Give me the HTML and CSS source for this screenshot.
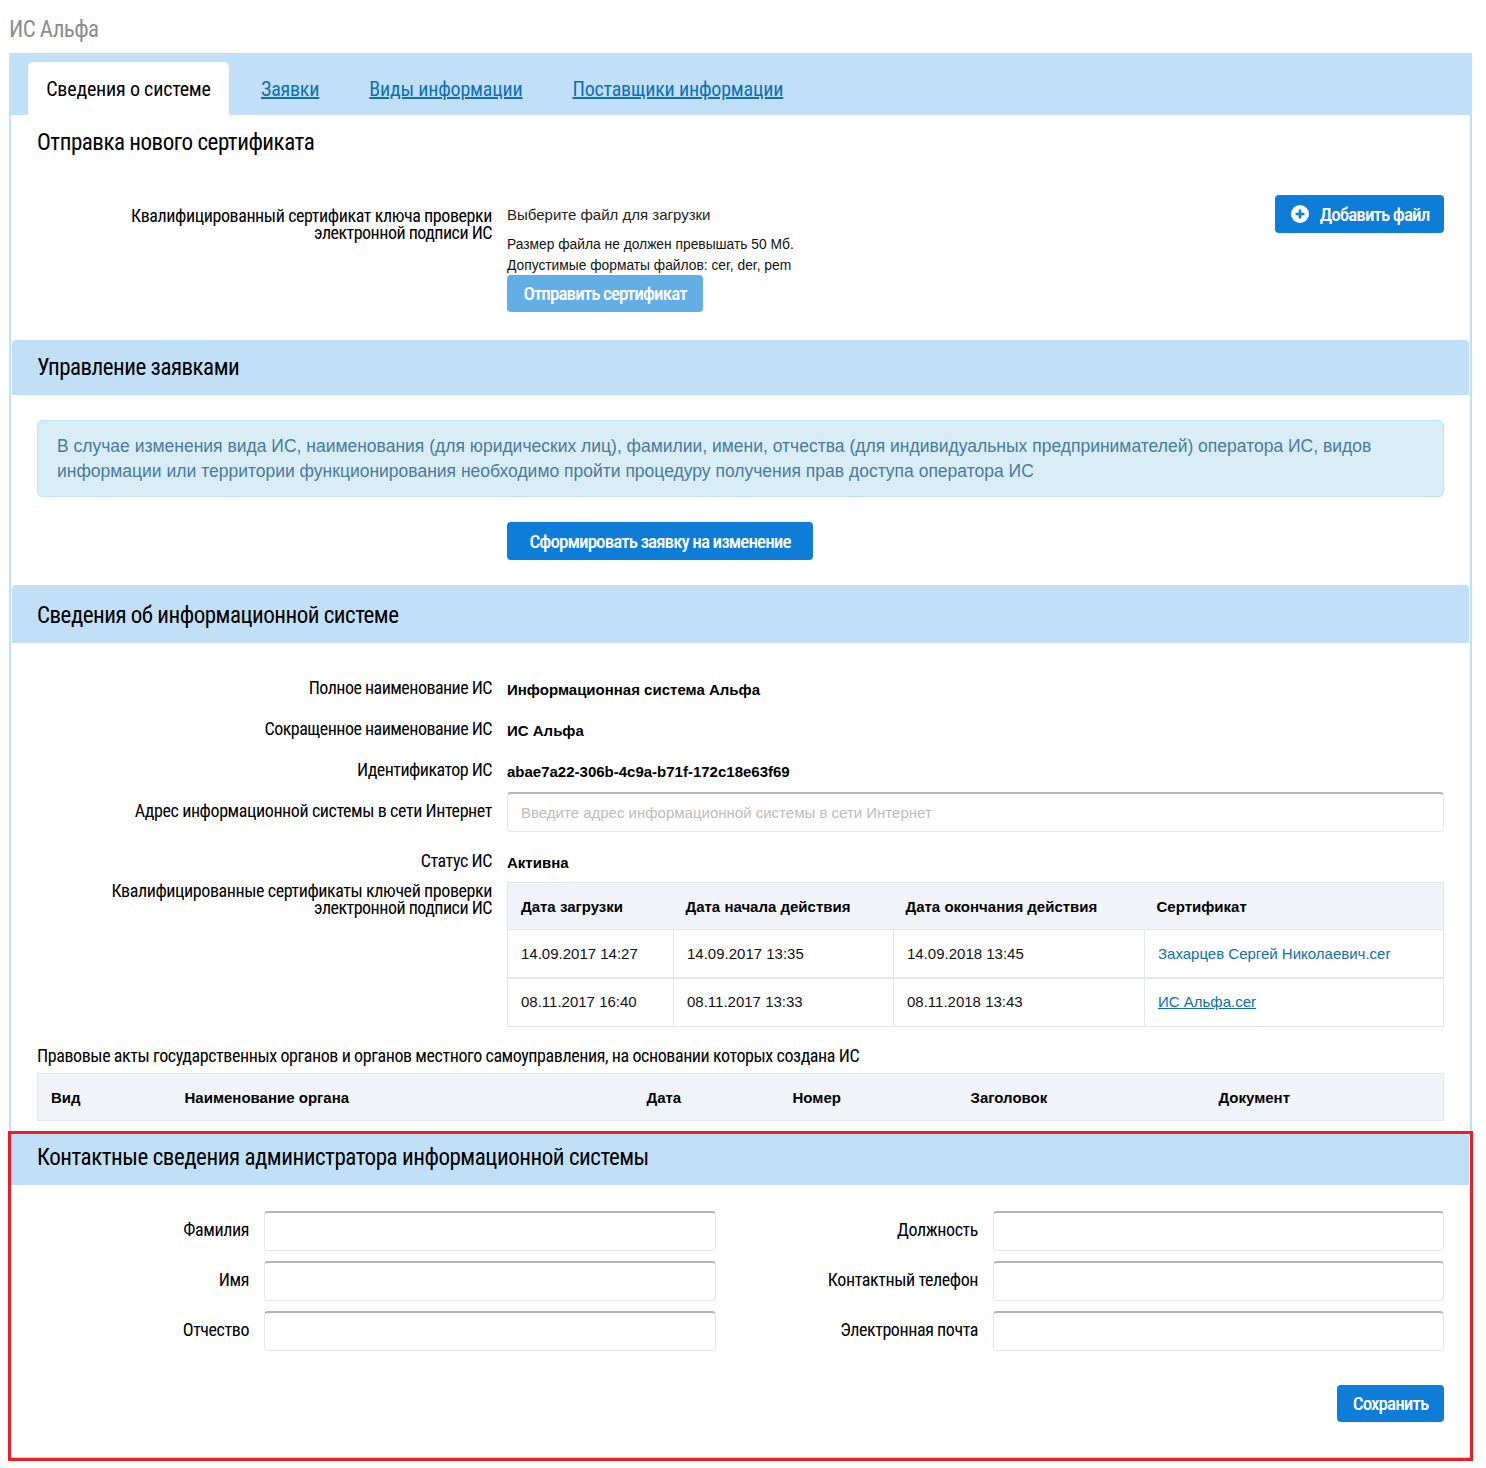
FILE: index.html
```html
<!DOCTYPE html>
<html lang="ru">
<head>
<meta charset="utf-8">
<title>ИС Альфа</title>
<link rel="stylesheet" href="styles.css">
</head>
<body>
<div class="page">
  <div class="page-title">ИС Альфа</div>
  <nav class="tabs">
    <span class="tab active">Сведения о системе</span>
    <a class="tab" href="#">Заявки</a>
    <a class="tab" href="#">Виды информации</a>
    <a class="tab" href="#">Поставщики информации</a>
  </nav>
  <main class="panel">
    <section class="cert">
      <h2 class="plain-head">Отправка нового сертификата</h2>
      <div class="cert-row">
        <div class="label two-line">Квалифицированный сертификат ключа проверки<br><span class="tight">электронной подписи ИС</span></div>
        <div class="cert-body">
          <div class="pick">Выберите файл для загрузки</div>
          <div class="hint">Размер файла не должен превышать 50 Мб.</div>
          <div class="hint">Допустимые форматы файлов: cer, der, pem</div>
          <button class="btn btn-send" type="button">Отправить сертификат</button>
        </div>
        <button class="btn btn-add" type="button">
          <svg class="plus" viewBox="0 0 18 18" width="18" height="18" aria-hidden="true"><circle cx="9" cy="9" r="9" fill="#fff"/><path d="M9 4.5v9M4.5 9h9" stroke="#0d7dd8" stroke-width="2.6"/></svg>
          Добавить файл
        </button>
      </div>
    </section>

    <h2 class="band band-a">Управление заявками</h2>
    <div class="alert">В случае изменения вида ИС, наименования (для юридических лиц), фамилии, имени, отчества (для индивидуальных предпринимателей) оператора ИС, видов информации или территории функционирования необходимо пройти процедуру получения прав доступа оператора ИС</div>
    <div class="center-action"><button class="btn btn-form" type="button">Сформировать заявку на изменение</button></div>

    <h2 class="band band-b">Сведения об информационной системе</h2>
    <div class="info">
      <div class="info-row"><div class="label">Полное наименование ИС</div><div class="value">Информационная система Альфа</div></div>
      <div class="info-row"><div class="label">Сокращенное наименование ИС</div><div class="value">ИС Альфа</div></div>
      <div class="info-row"><div class="label">Идентификатор ИС</div><div class="value">abae7a22-306b-4c9a-b71f-172c18e63f69</div></div>
      <div class="info-row input-row"><div class="label">Адрес информационной системы в сети Интернет</div><input class="field" type="text" placeholder="Введите адрес информационной системы в сети Интернет"></div>
      <div class="info-row status-row"><div class="label">Статус ИС</div><div class="value">Активна</div></div>
      <div class="table-row">
        <div class="label two-line">Квалифицированные сертификаты ключей проверки<br><span class="tight">электронной подписи ИС</span></div>
        <table class="grid certs">
          <thead><tr><th>Дата загрузки</th><th>Дата начала действия</th><th>Дата окончания действия</th><th>Сертификат</th></tr></thead>
          <tbody>
            <tr><td>14.09.2017 14:27</td><td>14.09.2017 13:35</td><td>14.09.2018 13:45</td><td><a class="plain-link" href="#">Захарцев Сергей Николаевич.cer</a></td></tr>
            <tr class="second"><td>08.11.2017 16:40</td><td>08.11.2017 13:33</td><td>08.11.2018 13:43</td><td><a href="#">ИС Альфа.cer</a></td></tr>
          </tbody>
        </table>
      </div>
      <div class="acts-title">Правовые акты государственных органов и органов местного самоуправления, на основании которых создана ИС</div>
      <table class="grid acts">
        <thead><tr><th>Вид</th><th>Наименование органа</th><th>Дата</th><th>Номер</th><th>Заголовок</th><th>Документ</th></tr></thead>
      </table>
    </div>

    <section class="contact">
      <h2 class="band band-c">Контактные сведения администратора информационной системы</h2>
      <div class="contact-grid">
        <label class="label">Фамилия</label><input class="field" type="text">
        <label class="label">Должность</label><input class="field" type="text">
        <label class="label">Имя</label><input class="field" type="text">
        <label class="label">Контактный телефон</label><input class="field" type="text">
        <label class="label">Отчество</label><input class="field" type="text">
        <label class="label">Электронная почта</label><input class="field" type="text">
      </div>
      <div class="save-row"><button class="btn btn-save" type="button">Сохранить</button></div>
    </section>
  </main>
</div>
</body>
</html>
```
FILE: styles.css
```css
* { box-sizing: border-box; }
html, body { margin: 0; padding: 0; background: #fff; }
body { font-family: "Liberation Sans", Arial, sans-serif; color: #000; }
.page { width: 1463px; margin-left: 9px; padding-bottom: 10px; }
.page-title, .tab, .plain-head, .band, .label, .btn, .acts-title {
  font-family: Roboto, "Liberation Sans", sans-serif;
  font-stretch: 75%;
}
.page-title { height: 53px; padding-top: 15px; font-size: 23px; line-height: 29px; color: #8c8c8c; letter-spacing: -0.6px; }
.tabs { display: flex; align-items: flex-end; height: 62px; padding-left: 19px; background: #c1dff7; }
.tab { height: 53px; padding: 15px 19px 0; font-size: 20px; line-height: 25px; color: #0d6fb8; letter-spacing: -0.2px; margin-right: 12px; }
.tab.active { width: 201px; padding: 15px 0 0; margin-right: 13px; text-align: center; color: #000; background: #fff; border-radius: 5px 5px 0 0; }
.panel { border: solid #c1dff7; border-width: 0 2px; }
.plain-head { margin: 0; padding: 14px 0 0 26px; height: 80px; font-size: 23px; line-height: 28px; font-weight: 400; letter-spacing: -0.48px; }
.cert-row { display: flex; align-items: flex-start; height: 145px; margin: 0; }
.label { font-size: 18px; line-height: 17px; text-align: right; letter-spacing: -0.42px; padding-right: 1px; }
.tight { letter-spacing: -0.52px; }
.cert-row > .label { width: 482px; padding-top: 12px; flex: none; }
.cert-body { margin-left: 14px; flex: 1; }
.pick { padding-top: 11px; line-height: 17px; color: #222; font-size: 15px; height: 39px; }
.hint { line-height: 21px; font-size: 13.8px; color: #111; }
.btn { border: 0; border-radius: 4px; color: #fff; background: #0d7dd8; font-size: 19px; letter-spacing: -0.92px; font-weight: 500; }
.btn-send { display: block; width: 196px; height: 37px; margin-top: -1px; background: #64aee6; padding: 0; }
.btn-add { display: flex; align-items: center; justify-content: center; gap: 11px; flex: none; width: 169px; height: 38px; margin: 0 26px 0 0; padding: 0 0 0 1px; }
.band { margin: 0 0 0 1px; width: 1457px; padding-left: 25px; background: #c1dff7; font-size: 23px; font-weight: 400; letter-spacing: -0.5px; border-radius: 4px 4px 0 0; }
.band-a { height: 55px; line-height: 55px; }
.band-b { height: 58px; line-height: 62px; }
.band-c { height: 51px; line-height: 48px; border-radius: 0; padding-left: 26px; margin-left: 0; width: 1458px; letter-spacing: -0.46px; }
.alert { margin: 25px 26px; height: 77px; padding: 13px 19px; font-size: 17.5px; line-height: 25px; color: #4a7a9e; background: #d9edf7; border: 1px solid #bce8f1; border-radius: 5px; }
.center-action { height: 63px; padding-left: 496px; }
.btn-form { width: 306px; height: 38px; padding: 0; }
.info { padding: 26px 26px 0; height: 491px; }
.info-row { display: flex; align-items: center; height: 41px; }
.info-row .label { width: 456px; flex: none; margin-top: -5px; letter-spacing: -0.54px; }
.value { margin-left: 14px; font-size: 15px; font-weight: 700; line-height: 17px; }
.input-row { height: 41px; align-items: flex-start; }
.info-row.input-row .label { margin-top: 10px; letter-spacing: -0.42px; }
.input-row .field { margin-left: 14px; flex: 1; }
.status-row { height: 49px; padding-top: 8px; }
.info-row.status-row .label { margin-top: -3px; letter-spacing: -0.42px; }
.status-row .value { padding-top: 2px; }
.field { display: block; height: 40px; min-width: 0; padding: 0 13px; border: 1px solid #e2e7ec; border-top: 2px solid #b4b4b4; border-radius: 4px; background: #fff; font: 15px "Liberation Sans", Arial, sans-serif; }
.field::placeholder { color: #bcbcbc; opacity: 1; }
.table-row { display: flex; align-items: flex-start; }
.table-row > .label { width: 456px; flex: none; }
.grid { border-collapse: collapse; table-layout: fixed; font-size: 15px; }
.grid th { height: 47px; padding: 0 13px; text-align: left; background: #f0f4f8; font-weight: 700; border-top: 1px solid #e2e7ec; border-bottom: 1px solid #e2e7ec; }
.grid th:first-child { border-left: 1px solid #e2e7ec; }
.grid th:last-child { border-right: 1px solid #e2e7ec; }
.grid td { height: 48px; padding: 0 13px; border: 1px solid #e2e7ec; color: #111; }
.grid .second td { height: 49px; padding-bottom: 2px; border-top-width: 2px; }
.certs { margin-left: 14px; width: 937px; }
.certs th:not(:first-child) { padding-left: 12px; }
.certs th:nth-child(1) { width: 166px; }
.certs th:nth-child(2) { width: 220px; }
.certs th:nth-child(3) { width: 251px; }
.grid a { color: #0d6fb8; }
.grid a.plain-link { text-decoration: none; }
.acts-title { margin-top: 20px; height: 26px; font-size: 18px; line-height: 18px; letter-spacing: -0.42px; }
.acts { width: 1407px; }
.acts th:nth-child(1) { width: 134px; }
.acts th:nth-child(2) { width: 462px; }
.acts th:nth-child(3) { width: 146px; }
.acts th:nth-child(4) { width: 178px; }
.acts th:nth-child(5) { width: 248px; }
.contact { outline: 3px solid #ee1c25; height: 324px; border-bottom: 1px solid #d8d8d8; }
.contact-grid { display: grid; grid-template-columns: 239px 452px 249px 451px; column-gap: 14px; row-gap: 10px; padding-top: 26px; align-items: center; }
.contact-grid .label { margin-top: -4px; }
.save-row { display: flex; justify-content: flex-end; padding: 34px 26px 0 0; }
.btn-save { width: 107px; height: 37px; padding: 0; }
```
